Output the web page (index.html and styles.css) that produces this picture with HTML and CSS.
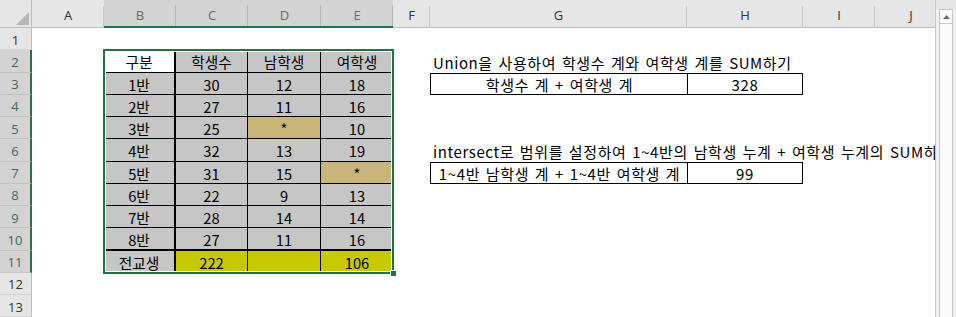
FILE: index.html
```html
<!DOCTYPE html>
<html lang="ko">
<head>
<meta charset="utf-8">
<title>Sheet</title>
<link rel="stylesheet" href="styles.css">
</head>
<body>
<div class="window">
  <div class="sheet">
    <div class="corner"><svg width="32" height="28" viewBox="0 0 32 28"><polygon points="29,12 29,25 16,25" fill="#b7b7b7"/></svg></div>
    <div class="colh">A</div>
    <div class="colh sel">B</div>
    <div class="colh sel">C</div>
    <div class="colh sel">D</div>
    <div class="colh sel">E</div>
    <div class="colh">F</div>
    <div class="colh">G</div>
    <div class="colh">H</div>
    <div class="colh">I</div>
    <div class="colh">J</div>

    <div class="rowh">1</div>
    <div class="rowh sel">2</div>
    <div class="rowh sel">3</div>
    <div class="rowh sel">4</div>
    <div class="rowh sel">5</div>
    <div class="rowh sel">6</div>
    <div class="rowh sel">7</div>
    <div class="rowh sel">8</div>
    <div class="rowh sel">9</div>
    <div class="rowh sel">10</div>
    <div class="rowh sel">11</div>
    <div class="rowh">12</div>
    <div class="rowh">13</div>

    <div class="table">
      <div class="c w bk">구분</div><div class="c g">학생수</div><div class="c g">남학생</div><div class="c g lc">여학생</div>
      <div class="c g bk">1반</div><div class="c g">30</div><div class="c g">12</div><div class="c g lc">18</div>
      <div class="c g bk">2반</div><div class="c g">27</div><div class="c g">11</div><div class="c g lc">16</div>
      <div class="c g bk">3반</div><div class="c g">25</div><div class="c t">*</div><div class="c g lc">10</div>
      <div class="c g bk">4반</div><div class="c g">32</div><div class="c g">13</div><div class="c g lc">19</div>
      <div class="c g bk">5반</div><div class="c g">31</div><div class="c g">15</div><div class="c t lc">*</div>
      <div class="c g bk">6반</div><div class="c g">22</div><div class="c g">9</div><div class="c g lc">13</div>
      <div class="c g bk">7반</div><div class="c g">28</div><div class="c g">14</div><div class="c g lc">14</div>
      <div class="c g bk bb">8반</div><div class="c g bb">27</div><div class="c g bb">11</div><div class="c g lc bb">16</div>
      <div class="c g bk lr">전교생</div><div class="c y lr">222</div><div class="c y lr"></div><div class="c y lc lr">106</div>
      <div class="selection"><span class="handle"></span></div>
    </div>

    <div class="note n1">Union을 사용하여 학생수 계와 여학생 계를 SUM하기</div>
    <div class="box bl r3">학생수 계 + 여학생 계</div>
    <div class="box br r3">328</div>

    <div class="note n2">intersect로 범위를 설정하여 1~4반의 남학생 누계 + 여학생 누계의 SUM하기</div>
    <div class="box bl r7">1~4반 남학생 계 + 1~4반 여학생 계</div>
    <div class="box br r7">99</div>
  </div>
  <div class="vscroll">
    <div class="vs-top"></div>
    <div class="vs-btn"><svg width="7" height="4" viewBox="0 0 7 4"><polygon points="0,4 7,4 3.5,0" fill="#6a6a6a"/></svg></div>
    <div class="vs-thumb"></div>
  </div>
</div>
</body>
</html>
```

FILE: styles.css
```css
* { box-sizing: border-box; }
html, body { margin: 0; padding: 0; background: #fff; }
body {
  width: 956px;
  height: 317px;
  overflow: hidden;
  font-family: "Noto Sans CJK KR", "Noto Sans", sans-serif;
  color: #000;
}
.window {
  display: flex;
  width: 956px;
  height: 317px;
}
.sheet {
  width: 935px;
  height: 317px;
  overflow: hidden;
  display: grid;
  grid-template-columns: 32px 72px 72px 72px 73px 72px 37px 257px 116px 72px 72px;
  grid-template-rows: 28px repeat(13, 22.25px);
}
.corner {
  grid-column: 1;
  grid-row: 1;
  background: #e6e6e6;
  border-bottom: 1px solid #bdbdbd;
  border-right: 1px solid #bdbdbd;
}
.corner svg { display: block; }
.colh {
  grid-row: 1;
  background: linear-gradient(#c6c6c6, #c6c6c6) right 0 bottom 0 / 1px 21px no-repeat, #e6e6e6;
  border-bottom: 1px solid #bdbdbd;
  font-family: "Open Sans", "Noto Sans", sans-serif;
  font-size: 13px;
  color: #333;
  display: flex;
  align-items: center;
  justify-content: center;
  padding-top: 2px;
}
.colh.sel {
  background: linear-gradient(#b8b8b8, #b8b8b8) right 0 bottom 0 / 1px 21px no-repeat, #d3d3d3;
  border-bottom: 2px solid #217346;
  color: #6b6b6b;
  padding-top: 3px;
}
.rowh {
  grid-column: 1;
  background: #e6e6e6;
  border-right: 1px solid #bdbdbd;
  border-bottom: 1px solid #d2d2d2;
  font-family: "Open Sans", "Noto Sans", sans-serif;
  font-size: 13px;
  color: #333;
  display: flex;
  align-items: center;
  justify-content: center;
  padding-top: 2px;
}
.rowh.sel {
  background: #d3d3d3;
  border-right: 2px solid #217346;
  border-bottom: 1px solid #c3c3c3;
  color: #3f6b52;
}

.table {
  grid-column: 3 / 7;
  grid-row: 3 / 13;
  position: relative;
  display: grid;
  grid-template-columns: 72px 72px 73px 72px;
  grid-template-rows: repeat(10, 22.25px);
}
.c {
  border-right: 1px solid #000;
  border-bottom: 1px solid #000;
  font-size: 14.7px;
  display: flex;
  align-items: center;
  justify-content: center;
  padding-top: 2px;
  white-space: nowrap;
}
.c.w { background: #fff; }
.c.g { background: #c6c6c6; }
.c.t { background: #c9b479; }
.c.y { background: #c8c800; }
.c.bk { border-right: 2px solid #000; }
.c.bb { border-bottom: 2px solid #000; }
.c.lc { border-right: none; }
.c.lr { border-bottom: none; }

.selection {
  position: absolute;
  inset: -1px;
  border: 2px solid #217346;
  box-shadow: inset 0 0 0 1px #fff;
  pointer-events: none;
}
.handle {
  position: absolute;
  right: -5px;
  bottom: -5px;
  width: 7px;
  height: 7px;
  background: #217346;
  border: 1px solid #fff;
}

.note {
  grid-column: 8 / 12;
  font-size: 15px;
  letter-spacing: 0.6px;
  word-spacing: 1px;
  white-space: nowrap;
  overflow: hidden;
  display: flex;
  align-items: center;
  padding-left: 3px;
  padding-top: 2px;
}
.n1 { grid-row: 3; }
.n2 { grid-row: 7; }
.box {
  font-size: 15px;
  letter-spacing: 0.6px;
  word-spacing: 1px;
  display: flex;
  align-items: center;
  justify-content: center;
  white-space: nowrap;
  border-top: 1px solid #000;
  border-bottom: 1px solid #000;
  padding-top: 2px;
}
.box.bl { grid-column: 8; border-left: 1px solid #000; margin-right: -1px; }
.box.br { grid-column: 9; border-left: 1px solid #000; border-right: 1px solid #000; }
.r3 { grid-row: 4; }
.r7 { grid-row: 8; }

.vscroll {
  width: 21px;
  height: 317px;
  background: #f0f0f0;
  border-left: 1px solid #c6c6c6;
  display: flex;
  flex-direction: column;
}
.vs-top {
  height: 9px;
  background: #e6e6e6;
}
.vs-btn {
  margin: 0 3px 0 3px;
  height: 15px;
  background: #fff;
  border: 1px solid #c4c4c4;
  display: flex;
  align-items: center;
  justify-content: center;
}
.vs-thumb {
  flex: 1;
  margin: 0 3px;
  background: #fbfbfb;
  border-left: 1px solid #c4c4c4;
  border-right: 1px solid #c4c4c4;
}
```
